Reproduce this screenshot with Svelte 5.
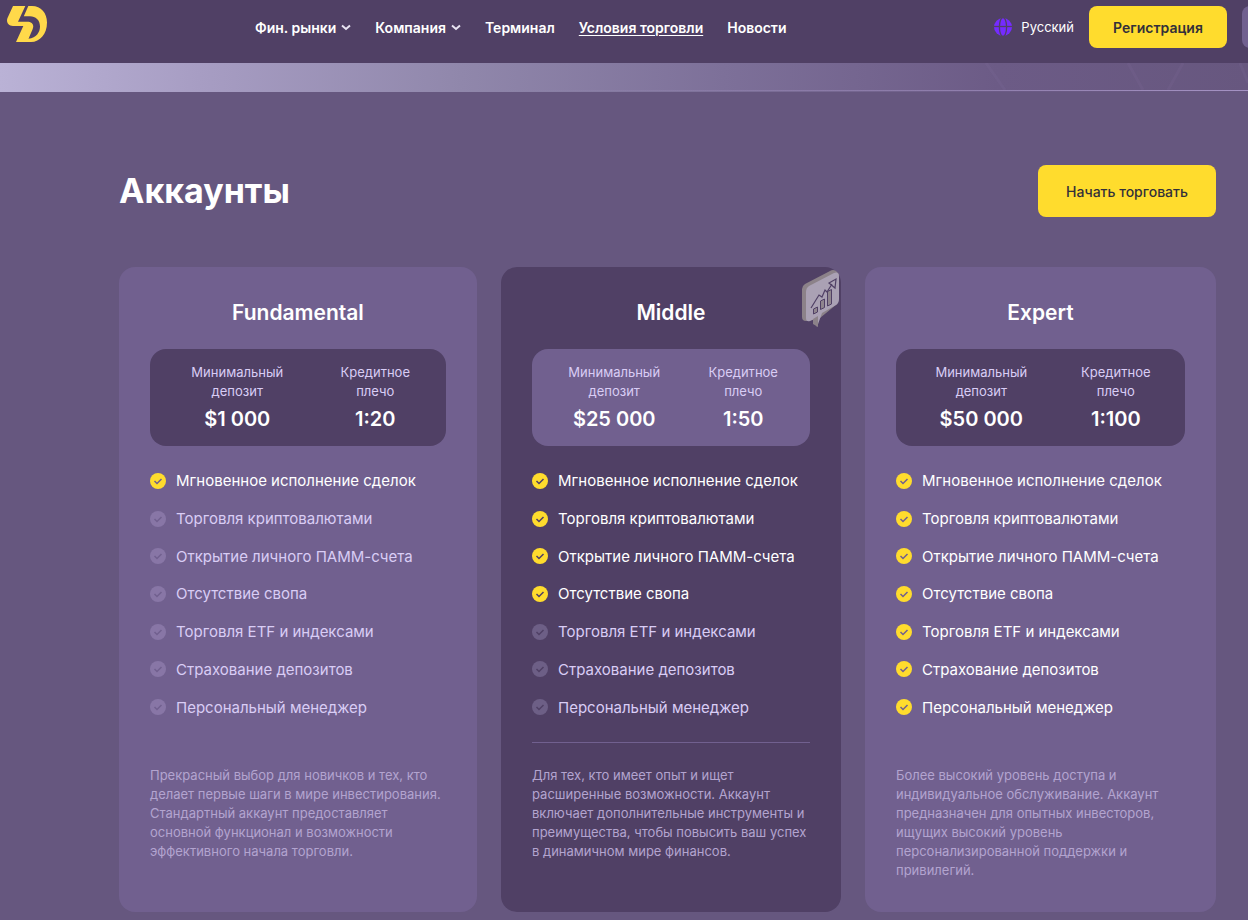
<script>
  const nav = [
    { label: 'Фин. рынки', menu: true },
    { label: 'Компания', menu: true },
    { label: 'Терминал' },
    { label: 'Условия торговли', active: true },
    { label: 'Новости' }
  ];

  const features = [
    'Мгновенное исполнение сделок',
    'Торговля криптовалютами',
    'Открытие личного ПАММ-счета',
    'Отсутствие свопа',
    'Торговля ETF и индексами',
    'Страхование депозитов',
    'Персональный менеджер'
  ];

  const plans = [
    {
      name: 'Fundamental',
      deposit: '$1 000',
      leverage: '1:20',
      included: 1,
      text: [
        'Прекрасный выбор для новичков и тех, кто',
        'делает первые шаги в мире инвестирования.',
        'Стандартный аккаунт предоставляет',
        'основной функционал и возможности',
        'эффективного начала торговли.'
      ]
    },
    {
      name: 'Middle',
      deposit: '$25 000',
      leverage: '1:50',
      included: 4,
      featured: true,
      text: [
        'Для тех, кто имеет опыт и ищет',
        'расширенные возможности. Аккаунт',
        'включает дополнительные инструменты и',
        'преимущества, чтобы повысить ваш успех',
        'в динамичном мире финансов.'
      ]
    },
    {
      name: 'Expert',
      deposit: '$50 000',
      leverage: '1:100',
      included: 7,
      text: [
        'Более высокий уровень доступа и',
        'индивидуальное обслуживание. Аккаунт',
        'предназначен для опытных инвесторов,',
        'ищущих высокий уровень',
        'персонализированной поддержки и',
        'привилегий.'
      ]
    }
  ];
</script>

<header>
  <a class="logo" href="#home" aria-label="SD">
    <svg width="40" height="36" viewBox="0 0 40 36" fill="#ffd94a">
      <path d="M6 0H18.300L11 15.700H20C25.500 15.700 27.500 19 25.500 23.500L21.500 32.700C29.500 32 33 26 33 20.500C33 14 28.500 10.300 23 10.300H16.800L21.300 0H25C34 0 40 7 40 16.500C40 28 33 36 24 36H9L16.300 20H6C1 20-1 16 .5 12Z" />
    </svg>
  </a>
  <nav>
    {#each nav as item}
      <a href="#nav" class:active={item.active}>
        {item.label}
        {#if item.menu}
          <svg width="10" height="7" viewBox="0 0 10 7" fill="none" stroke="#e9e4f2" stroke-width="2"><path d="M1 1.500L5 5L9 1.500" /></svg>
        {/if}
      </a>
    {/each}
  </nav>
  <div class="tools">
    <button class="lang">
      <svg width="18" height="18" viewBox="0 0 18 18">
        <circle cx="9" cy="9" r="9" fill="#752bff" />
        <g fill="none" stroke="#504065" stroke-width="1.300"><ellipse cx="9" cy="9" rx="3.600" ry="9.500" /><path d="M0 8.500H18" /></g>
      </svg>
      Русский
    </button>
    <button class="primary">Регистрация</button>
    <button class="login" aria-label="Войти"></button>
  </div>
</header>

<div class="banner">
  <svg width="270" height="27" viewBox="0 0 270 27" fill="none" stroke="#84739f" stroke-opacity=".15" stroke-width="3"><path d="M8 0L27 27M150 0L165 27M205 0L190 27M262 0L270 20" /></svg>
</div>

<main>
  <div class="heading">
    <h1>Аккаунты</h1>
    <button class="primary big">Начать торговать</button>
  </div>

  <div class="plans">
    {#each plans as plan}
      <article class:featured={plan.featured}>
        {#if plan.featured}
          <svg class="badge" width="38" height="58" viewBox="0 0 38 58">
            <path d="M0 19Q0 16 3 14L28 1Q31-1 34 1L37 4L35 34L18 48L11 54V50L4 51Q0 51 0 47Z" fill="#8c8289" />
            <path d="M4 22Q4 18 7 16L32 3Q37 1 37 7V29Q37 33 34 35L20 43L15 57L12 49L8 51Q4 52 4 48Z" fill="#aaa1b4" />
            <path d="M11 49L16 46V57L11 54Z" fill="#8c8289" />
            <g fill="#8f858e" stroke="#504065" stroke-width="1"><path d="M11.500 39L15.500 37V42L11.500 44ZM18.500 31L22.500 29V37.500L18.500 39.500ZM25.500 21.500L29.500 19.500V34L25.500 36Z" /></g>
            <path d="M9 38L17 25L20 27L23 20L25 22L30 14M27 13L34 9L33 18Z" fill="none" stroke="#504065" stroke-width="1.200" />
          </svg>
        {/if}
        <h2>{plan.name}</h2>
        <dl>
          <div><dt>Минимальный<br />депозит</dt><dd>{plan.deposit}</dd></div>
          <div><dt>Кредитное<br />плечо</dt><dd>{plan.leverage}</dd></div>
        </dl>
        <ul>
          {#each features as feature, i}
            <li class:on={i < plan.included}>
              <svg width="16" height="16" viewBox="0 0 16 16">
                <circle cx="8" cy="8" r="8" />
                <path d="M4.500 8L7 10.500L11.500 6" fill="none" stroke-width="1.500" />
              </svg>
              {feature}
            </li>
          {/each}
        </ul>
        <p>
          {#each plan.text as line, i}{#if i}<br />{/if}{line}{/each}
        </p>
      </article>
    {/each}
  </div>
</main>

<style>
  :global(body) {
    background: #66577f;
    color: #fff;
    font-family: Inter, "Open Sans", sans-serif;
    overflow-x: hidden;
  }
  h1, h2, dl, dd, ul, p {
    margin: 0;
    padding: 0;
  }
  a {
    color: inherit;
    text-decoration: none;
  }
  button {
    border: 0;
    font: inherit;
    color: inherit;
    background: none;
    cursor: pointer;
    white-space: nowrap;
  }
  header {
    display: flex;
    align-items: flex-start;
    height: 63px;
    box-sizing: border-box;
    padding: 6px 0 0 7px;
    background: #504065;
    overflow: hidden;
  }
  .logo {
    display: flex;
    margin-right: 208px;
  }
  nav {
    display: flex;
    align-items: center;
    gap: 24px;
    height: 42px;
    font-size: 14px;
    font-weight: 600;
    white-space: nowrap;
  }
  nav a {
    display: flex;
    align-items: center;
    gap: 5px;
  }
  nav .active {
    text-decoration: underline;
    text-underline-offset: 2px;
  }
  .tools {
    display: flex;
    align-items: center;
    gap: 15px;
    margin-left: auto;
    margin-right: -94px;
  }
  .lang {
    display: flex;
    align-items: center;
    gap: 9px;
    padding: 0;
    font-size: 13px;
  }
  .primary {
    height: 42px;
    width: 138px;
    padding: 0;
    border-radius: 8px;
    background: #ffdc2d;
    color: #33303a;
    font-size: 14px;
    font-weight: 600;
  }
  .login {
    width: 100px;
    height: 42px;
    border-radius: 8px;
    background: #71608f;
  }
  .banner {
    display: flex;
    justify-content: flex-end;
    height: 29px;
    background:
      linear-gradient(90deg, transparent 40%, #a593c4) 0 27px / 100% 1px no-repeat,
      linear-gradient(90deg, #bab2d6 0%, #a79dc3 16%, #9087ab 37%, #7d7099 58%, #6c5b86 80%, #67577f 100%);
  }
  main {
    padding: 73px 32px 7px 119px;
  }
  .heading {
    display: flex;
    align-items: center;
    justify-content: space-between;
    margin-bottom: 50px;
  }
  h1 {
    font-size: 34px;
    line-height: 40px;
    font-weight: 700;
  }
  .big {
    width: 178px;
    height: 52px;
    font-weight: 500;
  }
  .plans {
    display: grid;
    grid-template-columns: 358fr 340fr 351fr;
    gap: 24px;
  }
  article {
    position: relative;
    min-width: 0;
    padding: 32px 31px;
    border-radius: 16px;
    background: #71608f;
  }
  .featured {
    background: #504065;
  }
  .badge {
    position: absolute;
    top: 3px;
    right: 1px;
  }
  h2 {
    margin-bottom: 22px;
    font-size: 21px;
    line-height: 28px;
    font-weight: 600;
    text-align: center;
  }
  dl {
    display: grid;
    grid-template-columns: 56fr 44fr;
    padding: 14px 10px;
    border-radius: 16px;
    background: #504065;
    text-align: center;
  }
  .featured dl {
    background: #71608f;
  }
  dt {
    color: #d9cdf5;
    font-size: 13px;
    line-height: 19px;
    white-space: nowrap;
  }
  dd {
    margin-top: 5px;
    font-size: 20px;
    line-height: 26px;
    font-weight: 600;
    white-space: nowrap;
  }
  ul {
    display: grid;
    grid-auto-rows: 1fr;
    min-height: 264px;
    margin-top: 16px;
    padding-bottom: 16px;
    border-bottom: 1px solid #71608f;
    list-style: none;
  }
  li {
    display: flex;
    align-items: center;
    gap: 10px;
    color: #d9cdf5;
    font-size: 15px;
    white-space: nowrap;
  }
  li circle {
    fill: #8876a6;
  }
  li path {
    stroke: #71608f;
  }
  .featured li circle {
    fill: #6d5f86;
  }
  .featured li path {
    stroke: #504065;
  }
  li.on {
    color: #fff;
  }
  li.on circle,
  .featured li.on circle {
    fill: #ffdc2d;
  }
  li svg {
    flex: none;
  }
  p {
    margin-top: 23px;
    color: #b3a4cf;
    font-size: 13px;
    line-height: 19px;
    white-space: nowrap;
  }
</style>
